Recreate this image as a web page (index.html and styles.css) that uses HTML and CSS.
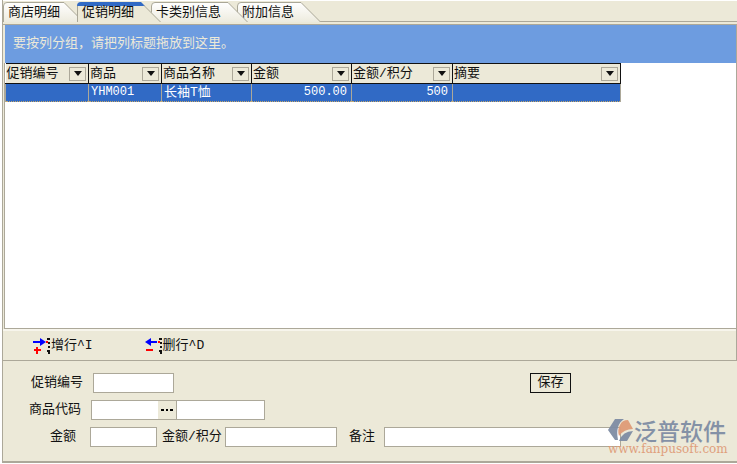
FILE: index.html
```html
<!DOCTYPE html>
<html lang="zh-CN">
<head>
<meta charset="utf-8">
<title>促销明细</title>
<link rel="stylesheet" href="styles.css">
</head>
<body>
<main class="window">
  <nav class="tabs">
    <button class="tab tab-first" type="button">
      <svg width="81" height="20" viewBox="0 0 81 20"><path d="M.5 20V4Q.5 .5 4 .5H61L80.500 20" fill="url(#face)" stroke="#aaa797"/><defs><linearGradient id="face" x2="0" y2="1"><stop stop-color="#fff"/><stop offset="1" stop-color="#edebde"/></linearGradient></defs></svg>
      <span>商店明细</span></button>
    <button class="tab tab-active" type="button">
      <svg width="84" height="20" viewBox="0 0 84 20"><path d="M0 20V4Q0 0 4 0H64L84 20" fill="#ece9d8"/><path d="M0 4Q0 0 4 0H64L68 4Z" fill="#316ac5"/><path d="M.5 20V4M67 3.500L83.500 20" fill="none" stroke="#aaa797"/></svg>
      <span>促销明细</span></button>
    <button class="tab tab-third" type="button">
      <svg width="97" height="20" viewBox="0 0 97 20"><path d="M.5 20V4Q.5 .5 4 .5H77L96.500 20" fill="url(#face)" stroke="#aaa797"/></svg>
      <span>卡类别信息</span></button>
    <button class="tab tab-last" type="button">
      <svg width="84" height="20" viewBox="0 0 84 20"><path d="M.5 20V4Q.5 .5 4 .5H64L83.500 20" fill="url(#face)" stroke="#aaa797"/></svg>
      <span>附加信息</span></button>
  </nav>
  <section class="panel">
    <div class="group-bar">要按列分组，请把列标题拖放到这里。</div>
    <div class="grid-area">
      <table class="grid">
        <colgroup><col class="c-no"><col class="c-code"><col class="c-name"><col class="c-amount"><col class="c-points"><col class="c-note"></colgroup>
        <thead>
          <tr>
            <th><div class="head">促销编号<button type="button" class="filter" aria-label="筛选促销编号"></button></div></th>
            <th><div class="head">商品<button type="button" class="filter" aria-label="筛选商品"></button></div></th>
            <th><div class="head">商品名称<button type="button" class="filter" aria-label="筛选商品名称"></button></div></th>
            <th><div class="head">金额<button type="button" class="filter" aria-label="筛选金额"></button></div></th>
            <th><div class="head">金额/积分<button type="button" class="filter" aria-label="筛选金额/积分"></button></div></th>
            <th><div class="head">摘要<button type="button" class="filter" aria-label="筛选摘要"></button></div></th>
          </tr>
        </thead>
        <tbody>
          <tr><td></td><td class="mono">YHM001</td><td>长袖T恤</td><td class="mono num">500.00</td><td class="mono num">500</td><td></td></tr>
        </tbody>
      </table>
    </div>
    <div class="toolbar">
      <button class="tool" type="button"><svg width="18" height="16" viewBox="0 0 18 16"><path d="M0 3H7V0L13 4L7 8V5H0Z" fill="#00f"/><path d="M3 9h2v2h3v2H5v3H3v-3H1v-2h2Z" fill="red"/><path d="M14 0h3v2h-3ZM15 4h2v2h-2ZM15 8h2v2h-2ZM14 12h3v2h-3ZM15 14h2v2h-2Z" fill="#111"/><path d="M13 3h2v2h-2Z" fill="red"/></svg>增行^I</button>
      <button class="tool" type="button"><svg width="18" height="16" viewBox="0 0 18 16"><path d="M12 3H6V0L0 4L6 8V5H12Z" fill="#00f"/><path d="M1 11h7v2H1Z" fill="red"/><path d="M14 0h3v2h-3ZM15 4h2v2h-2ZM15 8h2v2h-2ZM14 12h3v2h-3ZM15 14h2v2h-2Z" fill="#111"/><path d="M13 3h2v2h-2Z" fill="red"/></svg>删行^D</button>
    </div>
  </section>
  <form class="form">
    <div class="row">
      <label class="label-main" for="promo">促销编号</label>
      <input class="field promo" id="promo" type="text">
      <button class="save" type="button">保存</button>
    </div>
    <div class="row">
      <label class="label-code" for="code">商品代码</label>
      <div class="picker"><input id="code" type="text"><button type="button" aria-label="选择商品"><svg width="12" height="2" viewBox="0 0 12 2"><path d="M0 0h3v2H0ZM5 0h2v2H5ZM9 0h3v2H9Z"/></svg></button></div>
      <input class="field product" type="text" aria-label="商品名称">
    </div>
    <div class="row">
      <label class="label-amount" for="amount">金额</label>
      <input class="field amount" id="amount" type="text">
      <label class="label-points" for="points">金额/积分</label>
      <input class="field points" id="points" type="text">
      <label class="label-note" for="note">备注</label>
      <input class="field note" id="note" type="text">
    </div>
  </form>
  <div class="brand">
    <div class="brand-top">
      <svg width="26" height="24" viewBox="0 0 26 24"><path d="M7 1H16Q7 7 10 22H7L0 12Z" fill="#7f8da4"/><path d="M12 7Q14 2 20 2L25 11Q16 11 11 18Q9 12 12 7Z" fill="#df9c78"/><path d="M11 23Q15 13 25 13L19 23Z" fill="#7f8da4"/></svg>
      <span class="brand-name">泛普软件</span>
    </div>
    <span class="brand-url">www.fanpusoft.com</span>
  </div>
</main>
</body>
</html>
```
FILE: styles.css
```css
* { box-sizing: border-box; }
body {
  margin: 0;
  background: #fff;
  color: #111;
  font: 13px/18px "Liberation Mono", "Noto Sans CJK SC", monospace;
}
button, input { font: inherit; color: inherit; margin: 0; padding: 0; border-radius: 0; }
svg { display: block; flex: none; }

.window {
  position: relative;
  min-height: 463px;
  margin: 0 0 1px 2px;
  display: flex;
  flex-direction: column;
  background: #ece9d8;
  border: solid #aca899;
  border-width: 0 0 2px 1px;
}
.tabs { display: flex; padding-top: 1px; border-bottom: 1px solid #aca899; border-top: 1px solid #fff; }
.tab {
  position: relative;
  height: 19px;
  border: 0;
  background: none;
  padding: 2px 0 0 5px;
  text-align: left;
  white-space: nowrap;
}
.tab svg { position: absolute; left: 0; top: 0; }
.tab span { position: relative; }
.tab-first { width: 81px; }
.tab-active { width: 84px; margin-left: -7px; z-index: 3; }
.tab-third { width: 97px; margin-left: -10px; z-index: 2; }
.tab-last { width: 84px; margin-left: -11px; }

.panel {
  flex: 1;
  display: flex;
  flex-direction: column;
  margin-top: 2px;
  border: solid #aca899;
  border-width: 1px 1px 0 0;
}
.group-bar {
  height: 38px;
  margin-left: 2px;
  padding: 10px 8px;
  background: #6d9ce0;
  color: #ece9d8;
}
.grid-area {
  flex: 1;
  margin-left: 1px;
  background: #fff;
  border: solid #aca899;
  border-width: 0 0 1px 1px;
}
.grid { width: 616px; table-layout: fixed; border-collapse: collapse; }
.c-no { width: 83px; }
.c-code { width: 73px; }
.c-name { width: 90px; }
.c-amount { width: 100px; }
.c-points { width: 101px; }
.grid th {
  height: 20px;
  padding: 0 2px 0 1px;
  border: 1px solid #111;
  background: #ece9d8;
  font-weight: normal;
  text-align: left;
}
.grid th:first-child { border-left: 0; }
.head { display: flex; justify-content: space-between; align-items: center; white-space: nowrap; }
.filter {
  display: flex;
  align-items: center;
  justify-content: center;
  width: 17px;
  height: 14px;
  border: 1px solid #aca899;
  background: #ece9d8;
}
.filter::before { content: ""; border: solid transparent; border-width: 5px 4px 0; border-top-color: #111; }
.grid td {
  height: 18px;
  padding: 0 4px 0 2px;
  border: 1px solid #aca899;
  border-top: 0;
  border-bottom: 1px dotted #c8a868;
  background: #316ac5;
  color: #fff;
  line-height: 17px;
}
.grid .mono { font-size: 12px; }
.grid .num { text-align: right; }

.toolbar {
  display: flex;
  gap: 52px;
  height: 32px;
  padding-left: 30px;
  border-top: 2px solid #f7f5ec;
  border-bottom: 1px solid #aca899;
}
.tool { display: flex; align-items: center; height: 29px; border: 0; background: none; }

.form { display: grid; gap: 7px; padding: 12px 0 14px; }
.row { display: flex; align-items: center; height: 20px; }
.field, .picker { height: 20px; border: 1px solid #aca899; background: #fff; }
.field { min-width: 0; }
.label-main { width: 90px; padding-left: 28px; }
.label-code { width: 88px; padding-left: 26px; }
.label-amount { width: 87px; padding-left: 47px; }
.promo { width: 81px; }
.save { width: 41px; height: 20px; margin-left: 356px; line-height: 18px; border: 1px solid #111; background: #ece9d8; }
.picker { display: flex; width: 86px; }
.picker input { width: 66px; border: 0; background: none; }
.picker button { display: grid; place-items: center; width: 18px; border: 0; background: #ece9d8; }
.product { width: 89px; margin-left: -1px; }
.amount { width: 67px; }
.label-points { width: 68px; padding-left: 5px; white-space: nowrap; }
.points { width: 112px; }
.label-note { width: 47px; padding-left: 12px; }
.note { flex: 1; margin-right: 116px; }

.brand { position: absolute; right: 9px; bottom: 6px; width: 120px; opacity: .95; }
.brand-top { display: flex; align-items: center; height: 26px; }
.brand-name { color: #7f8da4; font: 500 23px/24px "Noto Sans CJK SC", sans-serif; white-space: nowrap; }
.brand-url { display: block; color: #df9c78; font: 12px/12px "DejaVu Serif", serif; white-space: nowrap; }
```
